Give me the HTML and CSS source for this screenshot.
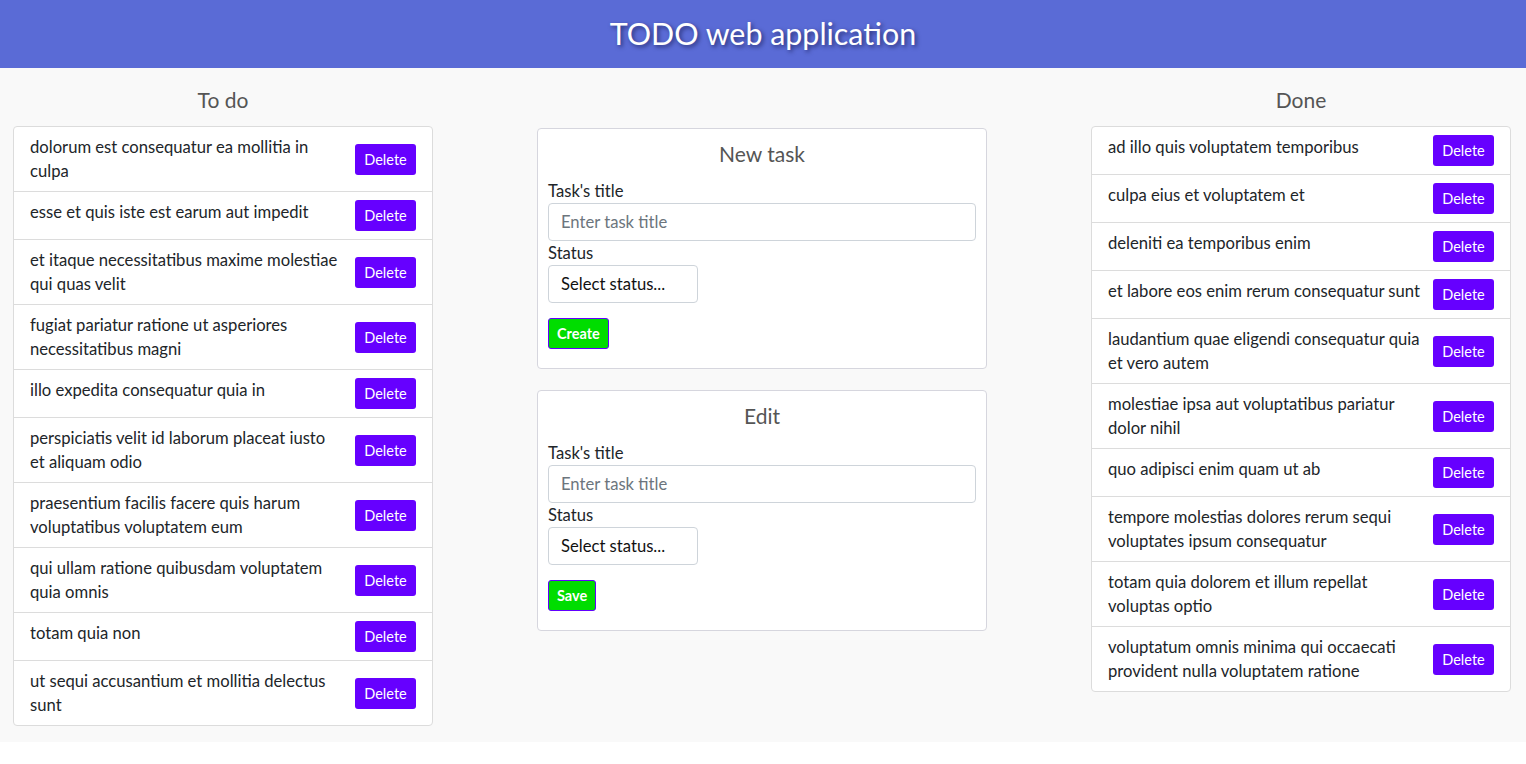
FILE: index.html
```html
<!DOCTYPE html>
<html lang="en">
<head>
<meta charset="utf-8">
<title>TODO web application</title>
<link rel="stylesheet" href="styles.css">
</head>
<body>
<header class="topbar">
  <h1 class="app-title">TODO web application</h1>
</header>
<main class="board">
  <section class="column side">
    <h2 class="col-title">To do</h2>
    <ul class="task-list">
      <li class="task"><span class="task-text">dolorum est consequatur ea mollitia in culpa</span><button class="btn-delete">Delete</button></li>
      <li class="task"><span class="task-text">esse et quis iste est earum aut impedit</span><button class="btn-delete">Delete</button></li>
      <li class="task"><span class="task-text">et itaque necessitatibus maxime molestiae qui quas velit</span><button class="btn-delete">Delete</button></li>
      <li class="task"><span class="task-text">fugiat pariatur ratione ut asperiores necessitatibus magni</span><button class="btn-delete">Delete</button></li>
      <li class="task"><span class="task-text">illo expedita consequatur quia in</span><button class="btn-delete">Delete</button></li>
      <li class="task"><span class="task-text">perspiciatis velit id laborum placeat iusto et aliquam odio</span><button class="btn-delete">Delete</button></li>
      <li class="task"><span class="task-text">praesentium facilis facere quis harum voluptatibus voluptatem eum</span><button class="btn-delete">Delete</button></li>
      <li class="task"><span class="task-text">qui ullam ratione quibusdam voluptatem quia omnis</span><button class="btn-delete">Delete</button></li>
      <li class="task"><span class="task-text">totam quia non</span><button class="btn-delete">Delete</button></li>
      <li class="task"><span class="task-text">ut sequi accusantium et mollitia delectus sunt</span><button class="btn-delete">Delete</button></li>
    </ul>
  </section>

  <section class="column middle">
    <form class="panel">
      <h3 class="panel-title">New task</h3>
      <label class="field-label">Task's title</label>
      <input class="text-input" type="text" placeholder="Enter task title">
      <label class="field-label">Status</label>
      <div class="select-box">Select status...</div>
      <button type="button" class="btn-submit">Create</button>
    </form>
    <form class="panel">
      <h3 class="panel-title">Edit</h3>
      <label class="field-label">Task's title</label>
      <input class="text-input" type="text" placeholder="Enter task title">
      <label class="field-label">Status</label>
      <div class="select-box">Select status...</div>
      <button type="button" class="btn-submit">Save</button>
    </form>
  </section>

  <section class="column side">
    <h2 class="col-title">Done</h2>
    <ul class="task-list">
      <li class="task"><span class="task-text">ad illo quis voluptatem temporibus</span><button class="btn-delete">Delete</button></li>
      <li class="task"><span class="task-text">culpa eius et voluptatem et</span><button class="btn-delete">Delete</button></li>
      <li class="task"><span class="task-text">deleniti ea temporibus enim</span><button class="btn-delete">Delete</button></li>
      <li class="task"><span class="task-text">et labore eos enim rerum consequatur sunt</span><button class="btn-delete">Delete</button></li>
      <li class="task"><span class="task-text">laudantium quae eligendi consequatur quia et vero autem</span><button class="btn-delete">Delete</button></li>
      <li class="task"><span class="task-text">molestiae ipsa aut voluptatibus pariatur dolor nihil</span><button class="btn-delete">Delete</button></li>
      <li class="task"><span class="task-text">quo adipisci enim quam ut ab</span><button class="btn-delete">Delete</button></li>
      <li class="task"><span class="task-text">tempore molestias dolores rerum sequi voluptates ipsum consequatur</span><button class="btn-delete">Delete</button></li>
      <li class="task"><span class="task-text">totam quia dolorem et illum repellat voluptas optio</span><button class="btn-delete">Delete</button></li>
      <li class="task"><span class="task-text">voluptatum omnis minima qui occaecati provident nulla voluptatem ratione</span><button class="btn-delete">Delete</button></li>
    </ul>
  </section>
</main>
</body>
</html>
```

FILE: styles.css
```css
* { box-sizing: border-box; }

body {
  margin: 0;
  background: #ffffff;
  font-family: "Lato", "Noto Sans", sans-serif;
  font-size: 16.64px;
  line-height: 24px;
  color: #212529;
}

.topbar {
  height: 68px;
  background: #5a6bd6;
  display: flex;
  align-items: center;
  justify-content: center;
}

.app-title {
  margin: 0 0 2px;
  color: #ffffff;
  font-size: 30.4px;
  font-weight: 400;
  line-height: 36px;
  text-shadow: 2px 2px 4px rgba(0, 0, 40, 0.55);
}

.board {
  background: #f9f9f9;
  display: flex;
  align-items: flex-start;
  padding: 16px 15px 16px 13px;
}

.column.side {
  width: 420px;
  flex: none;
}

.column.middle {
  flex: 1;
  display: flex;
  flex-direction: column;
  align-items: center;
  gap: 21px;
  padding-top: 44px;
}

.col-title {
  margin: 0 0 10px;
  text-align: center;
  font-size: 21px;
  font-weight: 400;
  line-height: 32px;
  color: #555555;
}

.task-list {
  list-style: none;
  margin: 0;
  padding: 0;
  background: #ffffff;
  border: 1px solid #dcdcdc;
  border-radius: 4px;
}

.task {
  display: flex;
  align-items: center;
  justify-content: space-between;
  padding: 8px 16px;
  border-bottom: 1px solid #dcdcdc;
}

.task:last-child { border-bottom: none; }

.task-text {
  flex: none;
  width: 313.5px;
  align-self: flex-start;
}

.btn-delete {
  flex: none;
  width: 61px;
  height: 31px;
  border: none;
  border-radius: 3px;
  background: #6600ff;
  color: #ffffff;
  font-family: inherit;
  font-size: 14.5px;
  padding: 0;
}

.panel {
  width: 450px;
  background: #ffffff;
  border: 1px solid #d6d6de;
  border-radius: 4px;
  padding: 8px 10px 19px;
  display: flex;
  flex-direction: column;
  align-items: flex-start;
}

.panel-title {
  align-self: stretch;
  margin: 0 0 8px;
  text-align: center;
  font-size: 21px;
  font-weight: 400;
  line-height: 34px;
  color: #555555;
}

.field-label {
  line-height: 24px;
}

.text-input {
  width: 100%;
  height: 38px;
  border: 1px solid #ced4da;
  border-radius: 4px;
  padding: 0 12px;
  font-family: inherit;
  font-size: 16.64px;
  color: #212529;
  background: #ffffff;
}

.text-input::placeholder { color: #6c757d; }

.select-box {
  width: 150px;
  height: 38px;
  border: 1px solid #ced4da;
  border-radius: 4px;
  padding: 0 12px;
  line-height: 36px;
  color: #111111;
  background: #ffffff;
}

.btn-submit {
  margin-top: 15px;
  height: 31px;
  padding: 0 8px;
  border: 1px solid #6200ff;
  border-radius: 3px;
  background: #00dd00;
  color: #ffffff;
  font-family: inherit;
  font-size: 14.5px;
  font-weight: 700;
}
```
